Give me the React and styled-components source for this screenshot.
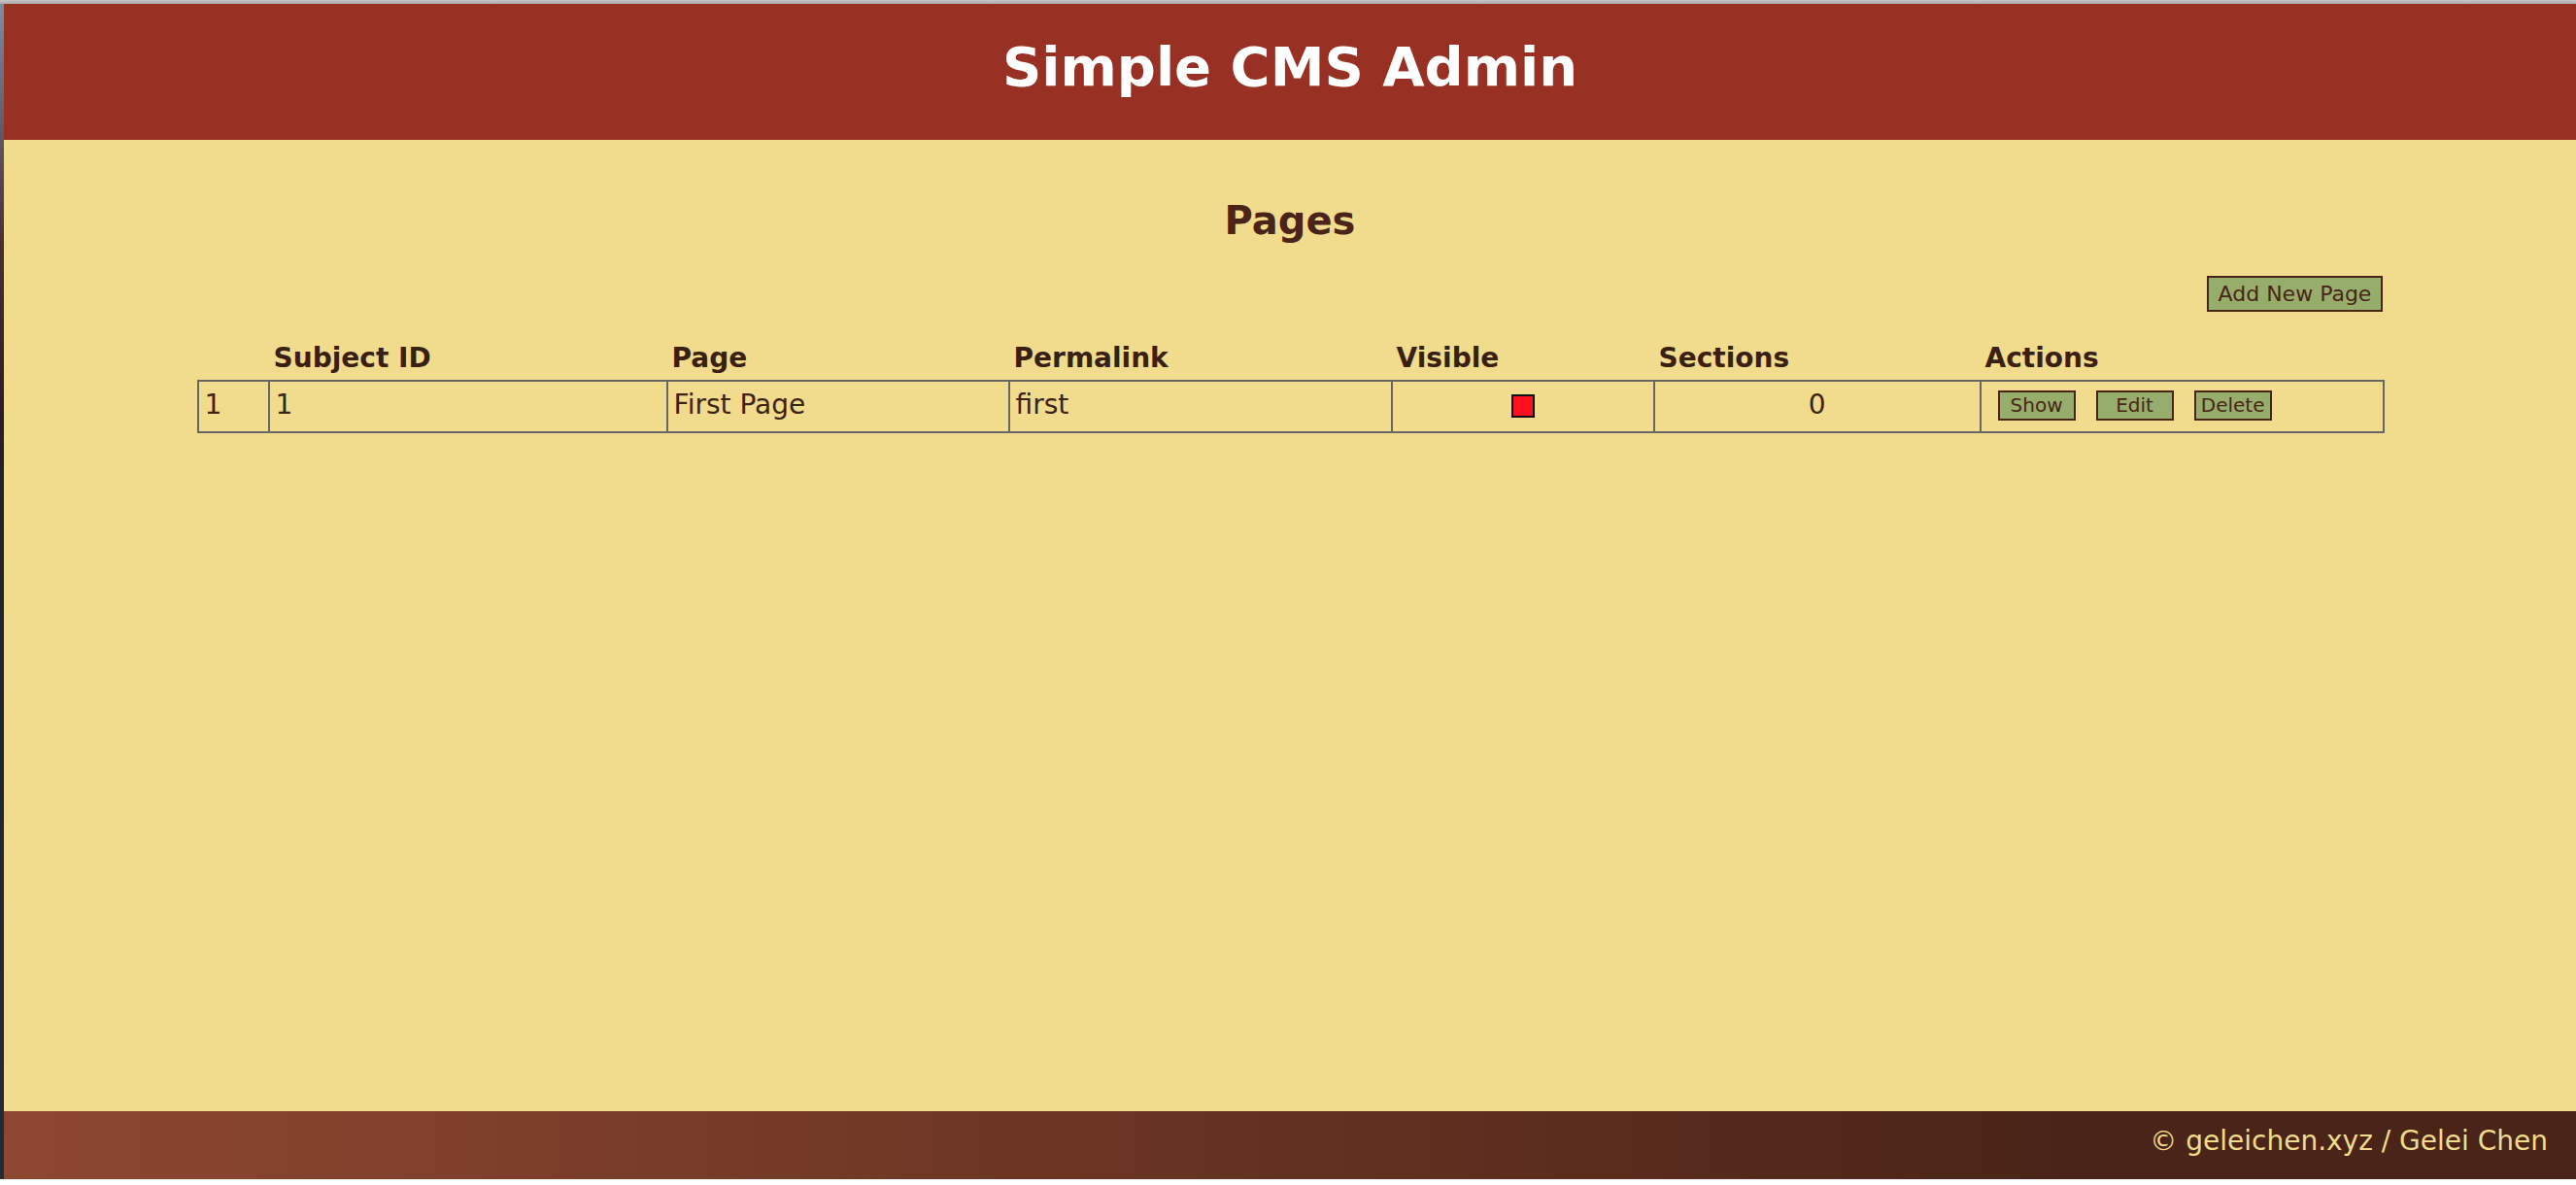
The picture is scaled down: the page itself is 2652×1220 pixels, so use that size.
import React from 'react';
import styled, { createGlobalStyle } from 'styled-components';

const Global = createGlobalStyle`
  html, body { margin: 0; padding: 0; background: #ffffff; }
  body { font-family: "DejaVu Sans", Verdana, "Noto Sans", sans-serif; }
`;

const Screen = styled.div`
  display: flex;
  flex-direction: column;
  height: 1220px;
  overflow: hidden;
  background: #ffffff;
`;

const Chrome = styled.div`
  height: 4px;
  flex: none;
  background: linear-gradient(#c8c8c8, #a9a9a9);
`;

const Body = styled.div`
  display: flex;
  flex: 1;
  min-height: 0;
`;

const SideStrip = styled.div`
  width: 4px;
  flex: none;
  background: linear-gradient(#7d8ca2 0%, #4a3035 20%, #2a1e24 35%, #1c2632 60%, #222b36 100%);
`;

const Main = styled.div`
  flex: 1;
  display: flex;
  flex-direction: column;
  min-width: 0;
`;

const Header = styled.header`
  height: 140px;
  box-sizing: border-box;
  padding-top: 32px;
  background: #983124;
  text-align: center;
  flex: none;
`;

const Title = styled.h1`
  margin: 0;
  font-size: 56px;
  line-height: 65px;
  font-weight: bold;
  color: #ffffff;
`;

const Content = styled.main`
  flex: 1;
  background: #f0dc8c;
  padding-top: 60px;
`;

const Heading = styled.h2`
  margin: 0;
  text-align: center;
  font-size: 40px;
  line-height: 46px;
  font-weight: bold;
  color: #4a2418;
`;

const Panel = styled.div`
  width: 85%;
  margin: 0 auto;
  display: flex;
  flex-direction: column;
`;

const Toolbar = styled.div`
  display: flex;
  justify-content: flex-end;
  margin-top: 34px;
`;

const Button = styled.button`
  font-family: "DejaVu Sans", Verdana, sans-serif;
  font-size: ${p => (p.$primary ? '22px' : '20px')};
  line-height: 25px;
  color: #4a2418;
  background: #97ad6b;
  border: 2px solid #4a2418;
  border-radius: 0;
  box-sizing: border-box;
  height: ${p => (p.$primary ? '37px' : '31px')};
  width: ${p => (p.$primary ? 'auto' : '80px')};
  padding: ${p => (p.$primary ? '0 10px' : '0')};
  margin: 0;
  cursor: pointer;
  white-space: nowrap;
`;

const Table = styled.table`
  width: 100%;
  border-collapse: collapse;
  table-layout: fixed;
  margin-top: 25px;
  font-size: 28px;
  color: #3d2314;
`;

const Col = styled.col`
  width: ${p => p.$w}px;
`;

const HeadCell = styled.th`
  text-align: left;
  font-weight: bold;
  padding: 6px 5px;
  line-height: 33px;
  color: #3a2012;
  white-space: nowrap;
`;

const Cell = styled.td`
  border: 2px solid #666666;
  padding: 7px 6px 11px;
  line-height: 33px;
  text-align: ${p => p.$align || 'left'};
  vertical-align: top;
  white-space: nowrap;
`;

const VisibleMark = styled.span`
  display: inline-block;
  width: 24px;
  height: 24px;
  box-sizing: border-box;
  background: ${p => (p.$on ? '#2e9a2e' : '#ff101e')};
  border: 2px solid #111111;
  vertical-align: middle;
`;

const ButtonGroup = styled.div`
  display: flex;
  align-items: flex-start;
  gap: 21px;
  height: 33px;
  padding-left: 11px;
  padding-top: 2px;
  box-sizing: border-box;
`;

const Footer = styled.footer`
  height: 70px;
  flex: none;
  box-sizing: border-box;
  background: linear-gradient(to right, #8e4730 0%, #4a2418 80%);
  color: #f0dc8c;
  font-size: 28px;
  line-height: 62px;
  text-align: right;
  padding-right: 29px;
`;

const BottomGap = styled.div`
  height: 6px;
  flex: none;
  background: #ffffff;
`;

const columns = [
  { key: 'idx', label: '', w: 73 },
  { key: 'subject', label: 'Subject ID', w: 410 },
  { key: 'page', label: 'Page', w: 352 },
  { key: 'permalink', label: 'Permalink', w: 394 },
  { key: 'visible', label: 'Visible', w: 270 },
  { key: 'sections', label: 'Sections', w: 336 },
  { key: 'actions', label: 'Actions', w: 415 },
];

const pages = [
  { idx: 1, subject: 1, page: 'First Page', permalink: 'first', visible: false, sections: 0 },
];

export default function App() {
  return (
    <>
      <Global />
      <Screen>
        <Chrome />
        <Body>
          <SideStrip />
          <Main>
            <Header>
              <Title>Simple CMS Admin</Title>
            </Header>
            <Content>
              <Heading>Pages</Heading>
              <Panel>
                <Toolbar>
                  <Button $primary>Add New Page</Button>
                </Toolbar>
                <Table>
                  <colgroup>
                    {columns.map(c => (
                      <Col key={c.key} $w={c.w} />
                    ))}
                  </colgroup>
                  <thead>
                    <tr>
                      {columns.map(c => (
                        <HeadCell key={c.key}>{c.label}</HeadCell>
                      ))}
                    </tr>
                  </thead>
                  <tbody>
                    {pages.map(p => (
                      <tr key={p.idx}>
                        <Cell>{p.idx}</Cell>
                        <Cell>{p.subject}</Cell>
                        <Cell>{p.page}</Cell>
                        <Cell>{p.permalink}</Cell>
                        <Cell $align="center">
                          <VisibleMark $on={p.visible} />
                        </Cell>
                        <Cell $align="center">{p.sections}</Cell>
                        <Cell>
                          <ButtonGroup>
                            <Button>Show</Button>
                            <Button>Edit</Button>
                            <Button>Delete</Button>
                          </ButtonGroup>
                        </Cell>
                      </tr>
                    ))}
                  </tbody>
                </Table>
              </Panel>
            </Content>
            <Footer>© geleichen.xyz / Gelei Chen</Footer>
          </Main>
        </Body>
        <BottomGap />
      </Screen>
    </>
  );
}
